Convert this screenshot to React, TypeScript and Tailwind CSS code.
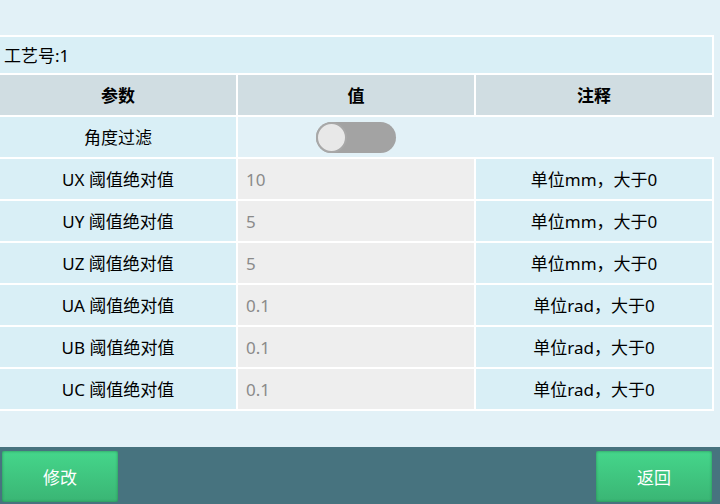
const FONT = { fontFamily: '"Noto Sans", "Noto Sans CJK SC", sans-serif' };

const ROWS = [
  { name: "UX 阈值绝对值", value: "10", note: "单位mm，大于0" },
  { name: "UY 阈值绝对值", value: "5", note: "单位mm，大于0" },
  { name: "UZ 阈值绝对值", value: "5", note: "单位mm，大于0" },
  { name: "UA 阈值绝对值", value: "0.1", note: "单位rad，大于0" },
  { name: "UB 阈值绝对值", value: "0.1", note: "单位rad，大于0" },
  { name: "UC 阈值绝对值", value: "0.1", note: "单位rad，大于0" },
];

function Toggle() {
  return (
    <span className="relative inline-flex h-[31px] w-[80px] items-center rounded-full bg-[#a3a3a3]">
      <span className="absolute left-0 h-[31px] w-[31px] rounded-full border-2 border-[#a8a8a8] bg-[#e8e8e8]" />
    </span>
  );
}

function GreenButton({ label }: { label: string }) {
  return (
    <button className="flex h-[51px] w-[116px] items-center justify-center rounded-[2px] bg-gradient-to-b from-[#45d68b] to-[#3ab574] pt-[2px] text-[17px] text-white shadow-[inset_0_0_3px_rgba(30,120,70,0.8)]">
      {label}
    </button>
  );
}

export default function App() {
  return (
    <div className="flex h-[504px] w-[720px] flex-col bg-[#e2f1f7] text-[17px] text-black" style={FONT}>
      <div className="h-[35px]" />
      <div className="flex w-[714px] flex-col gap-[2px] bg-white py-[2px]">
        <div className="flex pr-[2px]">
          <div className="flex h-[36px] flex-1 items-center bg-[#d9eff6] pl-[4px] pt-[2px]">工艺号:1</div>
        </div>
        <div className="flex gap-[2px] pr-[2px]">
          <div className="flex h-[40px] w-[236px] items-center justify-center bg-[#d0dde2] pt-[1px] font-bold">参数</div>
          <div className="flex h-[40px] w-[236px] items-center justify-center bg-[#d0dde2] pt-[1px] font-bold">值</div>
          <div className="flex h-[40px] w-[236px] items-center justify-center bg-[#d0dde2] pt-[1px] font-bold">注释</div>
        </div>
        <div className="flex bg-[#e2f1f7]">
          <div className="flex h-[40px] w-[238px] items-center justify-center border-r-2 border-white bg-[#d9eff6] pt-[1px]">
            角度过滤
          </div>
          <div className="flex w-[236px] items-center justify-center">
            <Toggle />
          </div>
        </div>
        {ROWS.map((r) => (
          <div key={r.name} className="flex gap-[2px] pr-[2px]">
            <div className="flex h-[40px] w-[236px] items-center justify-center bg-[#d9eff6] pt-[2px]">{r.name}</div>
            <div className="flex h-[40px] w-[236px] items-center bg-[#eeeeee] pl-[8px] pt-[2px] text-[#8a8a8a]">{r.value}</div>
            <div className="flex h-[40px] w-[236px] items-center justify-center bg-[#d9eff6] pt-[2px]">{r.note}</div>
          </div>
        ))}
      </div>
      <div className="flex-1" />
      <div className="flex h-[57px] items-start justify-between bg-[#47737f] pt-[4px] pl-[2px] pr-[8px]">
        <GreenButton label="修改" />
        <GreenButton label="返回" />
      </div>
    </div>
  );
}
